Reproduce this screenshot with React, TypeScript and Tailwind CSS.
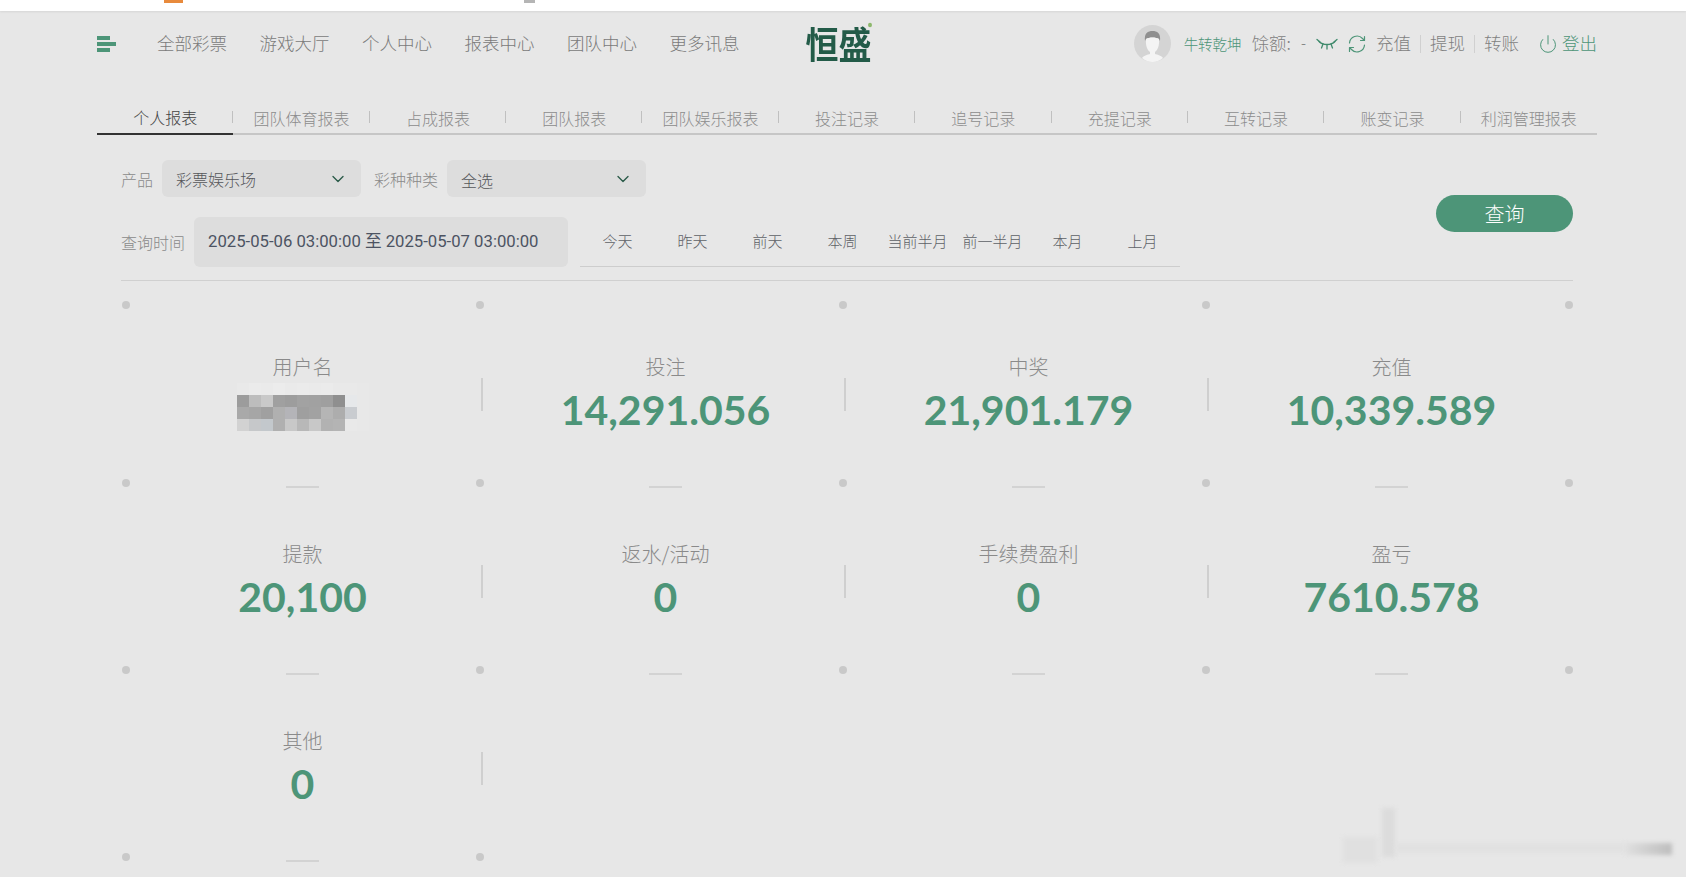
import React from 'react';
import { ChevronDown, Power } from 'lucide-react';

const navItems = ['全部彩票', '游戏大厅', '个人中心', '报表中心', '团队中心', '更多讯息'];
const tabs = ['个人报表', '团队体育报表', '占成报表', '团队报表', '团队娱乐报表', '投注记录', '追号记录', '充提记录', '互转记录', '账变记录', '利润管理报表'];
const quickDates = ['今天', '昨天', '前天', '本周', '当前半月', '前一半月', '本月', '上月'];

const stats = [
  { label: '用户名', value: null },
  { label: '投注', value: '14,291.056' },
  { label: '中奖', value: '21,901.179' },
  { label: '充值', value: '10,339.589' },
  { label: '提款', value: '20,100' },
  { label: '返水/活动', value: '0' },
  { label: '手续费盈利', value: '0' },
  { label: '盈亏', value: '7610.578' },
  { label: '其他', value: '0' },
];

// mosaic that hides the user name
const mosaic = [
  '#e9e9e9', '#ebebeb', '#eaeaea', '#ececec', '#eaeaea', '#ebebeb', '#eaeaea', '#ebebeb', '#e9e9e9', '#e9e9e9', '#e8e8e8',
  '#9c9c9c', '#bdbdbd', '#c9c9c9', '#a0a0a0', '#9d9d9d', '#a2a2a2', '#a1a1a1', '#9f9f9f', '#8f8f8f', '#e6e8ea', '#e8e8e8',
  '#a9a9a9', '#a6a6a6', '#a0a0a0', '#b0b0b0', '#b4b4b8', '#9f9f9f', '#a2a2a2', '#b5b5b5', '#adadad', '#c9ccd0', '#e8e8e8',
  '#d2d2d2', '#c6c8ca', '#c3c8cc', '#b0b0b0', '#c8c8c8', '#b8b8b8', '#c8c8c8', '#b2b2b2', '#b4b4b4', '#e9e9e9', '#e8e8e8',
];

const Dot = ({ className }: { className: string }) => (
  <span className={`absolute w-2 h-2 rounded-full bg-[#c9c9c9] ${className}`} />
);

const EyeClosed = () => (
  <svg width="22" height="12" viewBox="0 0 22 12" fill="none" stroke="#3f8a6c" strokeWidth="1.3" strokeLinecap="round">
    <path d="M3 3.5C7 7.5 15 7.5 19 3.5" />
    <path d="M1 1.5L4 4M18 4L21 1.5M7 6L5.5 10M15 6L16.5 10M11 7V11" />
  </svg>
);

const Refresh = () => (
  <svg width="20" height="20" viewBox="0 0 20 20" fill="none" stroke="#4d9578" strokeWidth="1.2" strokeLinecap="round" strokeLinejoin="round">
    <path d="M2.5 9A7.5 7.5 0 0 1 15.5 4.5L17 6" />
    <path d="M17.5 11A7.5 7.5 0 0 1 4.5 15.5L3 14" />
    <path d="M17.5 2.5V6.5H13.5" />
    <path d="M2.5 17.5V13.5H6.5" />
  </svg>
);

const Avatar = () => (
  <svg width="37" height="37" viewBox="0 0 37 37">
    <circle cx="18.5" cy="18.5" r="18.5" fill="#d4d4d4" />
    <path d="M11 16C10 8 14 6 18.5 6C23 6 27 8 26 16L25 14C22 12 15 12 12 14Z" fill="#8f8f8f" />
    <path d="M12 14C15 12 22 12 25 14C25.5 20 24 25 21 27L21 29C25 30 28 31 29 33C26 35.500 22 37 18.500 37C15 37 11 35.500 8 33C9 31 12 30 16 29L16 27C13 25 11.500 20 12 14Z" fill="#f4f4f4" />
  </svg>
);

const Select = ({ value, width, textClass }: { value: string; width: string; textClass?: string }) => (
  <div className={`flex items-center justify-between h-[37px] rounded-md bg-[#dddddd] pl-[14px] pr-[13px] ${width}`}>
    <span className={`text-[16px] text-[#55565a] ${textClass ?? ''}`}>{value}</span>
    <ChevronDown size={20} strokeWidth={1.6} className="text-[#2a5a48]" />
  </div>
);

export default function App() {
  return (
    <div className="relative w-[1686px] h-[877px] overflow-hidden bg-[#e7e7e7] font-['Noto_Sans_CJK_SC',sans-serif] font-light">
      {/* top strip of the page behind */}
      <div className="flex h-[11px] bg-white shadow-[0_1px_2px_rgba(0,0,0,0.08)]">
        <span className="ml-[164px] w-[19px] h-[3px] bg-[#e88a3c]" />
        <span className="ml-[341px] w-[11px] h-[3px] bg-[#b5b5b5]" />
      </div>

      <div className="ml-[97px] w-[1500px]">
        {/* main nav */}
        <div className="flex items-center justify-between h-[65px]">
          <div className="flex items-center">
            <div className="flex flex-col gap-[2px] w-[19px]">
              <span className="w-[13px] h-[4px] bg-[#4d9578]" />
              <span className="w-[19px] h-[4px] bg-[#4d9578]" />
              <span className="w-[13px] h-[4px] bg-[#4d9578]" />
            </div>
            <nav className="flex ml-[41px] gap-[32.500px]">
              {navItems.map((item) => (
                <a key={item} className="text-[17.500px] text-[#7a7a7a] whitespace-nowrap">{item}</a>
              ))}
            </nav>
            <div className="relative ml-[66px] w-[66px] text-[33px] leading-[37px] font-bold text-[#235b48] whitespace-nowrap scale-y-[1.12]">
              恒盛
              <span className="absolute right-0 top-0 w-[4px] h-[4px] rounded-full bg-[#8db86c]" />
            </div>
          </div>
          <div className="flex items-center">
            <Avatar />
            <span className="ml-[13px] text-[14.500px] text-[#4d9578] whitespace-nowrap">牛转乾坤</span>
            <span className="ml-[10px] text-[17.500px] text-[#7f7f7f] whitespace-nowrap">馀额:</span>
            <span className="ml-[10px] text-[15px] text-[#6f6f6f]">-</span>
            <span className="ml-[10px] flex"><EyeClosed /></span>
            <span className="ml-[9px] flex"><Refresh /></span>
            <a className="ml-[9px] text-[17.500px] text-[#7f7f7f]">充值</a>
            <span className="mx-[9px] w-px h-[18px] bg-[#d0d0d0]" />
            <a className="text-[17.500px] text-[#7f7f7f]">提现</a>
            <span className="mx-[9px] w-px h-[18px] bg-[#d0d0d0]" />
            <a className="text-[17.500px] text-[#7f7f7f]">转账</a>
            <Power size={20} strokeWidth={1.2} className="ml-[19px] text-[#4d9578]" />
            <a className="ml-[4px] text-[17.500px] text-[#4d9578]">登出</a>
          </div>
        </div>

        {/* report tabs */}
        <div className="flex mt-[24px] h-[35px] border-b-2 border-[#c6c6c6]">
          {tabs.map((tab, i) => (
            <div
              key={tab}
              className={`relative flex-1 flex items-center justify-center text-[16px] h-[35px] ${
                i === 0 ? 'border-b-2 border-[#333333] text-[#444444]' : 'text-[#8c8c8c]'
              }`}
            >
              {tab}
              {i < tabs.length - 1 && <span className="absolute right-0 top-[11px] w-px h-[12px] bg-[#c0c0c0]" />}
            </div>
          ))}
        </div>

        {/* filters */}
        <div className="mx-[24px] mt-[25px] flex items-center justify-between">
          <div className="flex flex-col gap-[20px]">
            <div className="flex items-center">
              <span className="text-[16px] text-[#8a8a8a]">产品</span>
              <Select value="彩票娱乐场" width="ml-[9px] w-[199px]" />
              <span className="ml-[13px] text-[16px] text-[#8a8a8a]">彩种种类</span>
              <Select value="全选" width="ml-[9px] w-[199px]" textClass="mt-[3px]" />
            </div>
            <div className="flex items-center">
              <span className="text-[16px] text-[#8a8a8a]">查询时间</span>
              <div className="flex items-center ml-[9px] h-[50px] w-[374px] pl-[14px] rounded-md bg-[#dddddd] text-[16.700px] font-normal text-[#4c5362] whitespace-nowrap font-['Roboto','Noto_Sans_CJK_SC',sans-serif]">
                2025-05-06 03:00:00 至 2025-05-07 03:00:00
              </div>
              <div className="flex ml-[12px] h-[50px] w-[600px] border-b border-[#cdcdcd]">
                {quickDates.map((d) => (
                  <span key={d} className="w-[75px] flex items-center justify-center text-[15px] text-[#5e6166]">{d}</span>
                ))}
              </div>
            </div>
          </div>
          <button className="w-[137px] h-[37px] rounded-full bg-[#4d9578] text-[20px] text-white">查询</button>
        </div>
        <div className="mx-[24px] mt-[13px] h-px bg-[#d0d0d0]" />

        {/* stats */}
        <div className="mx-[24px] mt-[20px] grid grid-cols-4">
          {stats.map((s, i) => (
            <div key={s.label} className="relative h-[187px] flex flex-col items-center pt-[51px]">
              {i < 4 && <Dot className="top-0 right-0" />}
              {i === 0 && <Dot className="top-0 left-[1px]" />}
              {i % 4 === 0 && <Dot className="bottom-[1px] left-[1px]" />}
              <Dot className="bottom-[1px] right-0" />
              {i % 4 !== 3 && <span className="absolute right-[1px] top-[77px] w-[2px] h-[33px] bg-[#cfcfcf]" />}
              <span className="text-[20px] leading-[29px] text-[#8a8a8a]">{s.label}</span>
              {s.value ? (
                <span className="mt-[5px] text-[41px] leading-[48px] font-bold text-[#4d9578] font-['Lato',sans-serif]">{s.value}</span>
              ) : (
                <div className="mt-[2px] grid grid-cols-[repeat(11,12px)] auto-rows-[12px]">
                  {mosaic.map((c, n) => (
                    <span key={n} style={{ backgroundColor: c }} />
                  ))}
                </div>
              )}
              <span className="absolute bottom-0 w-[33px] h-[2px] bg-[#d3d3d3]" />
            </div>
          ))}
        </div>
      </div>

      {/* blurred watermark, bottom right */}
      <div className="absolute left-[1343px] top-[837px] w-[34px] h-[26px] bg-[#e0e0e0] blur-[2px]" />
      <div className="absolute left-[1382px] top-[808px] w-[13px] h-[49px] bg-[#dcdcdc] blur-[2px]" />
      <div className="absolute left-[1395px] top-[843px] w-[230px] h-[10px] bg-[#e1e1e1] blur-[2px]" />
      <div className="absolute left-[1625px] top-[843px] w-[47px] h-[12px] bg-gradient-to-r from-[#e0e0e0] to-[#bdbdbd] blur-[2px]" />
    </div>
  );
}
